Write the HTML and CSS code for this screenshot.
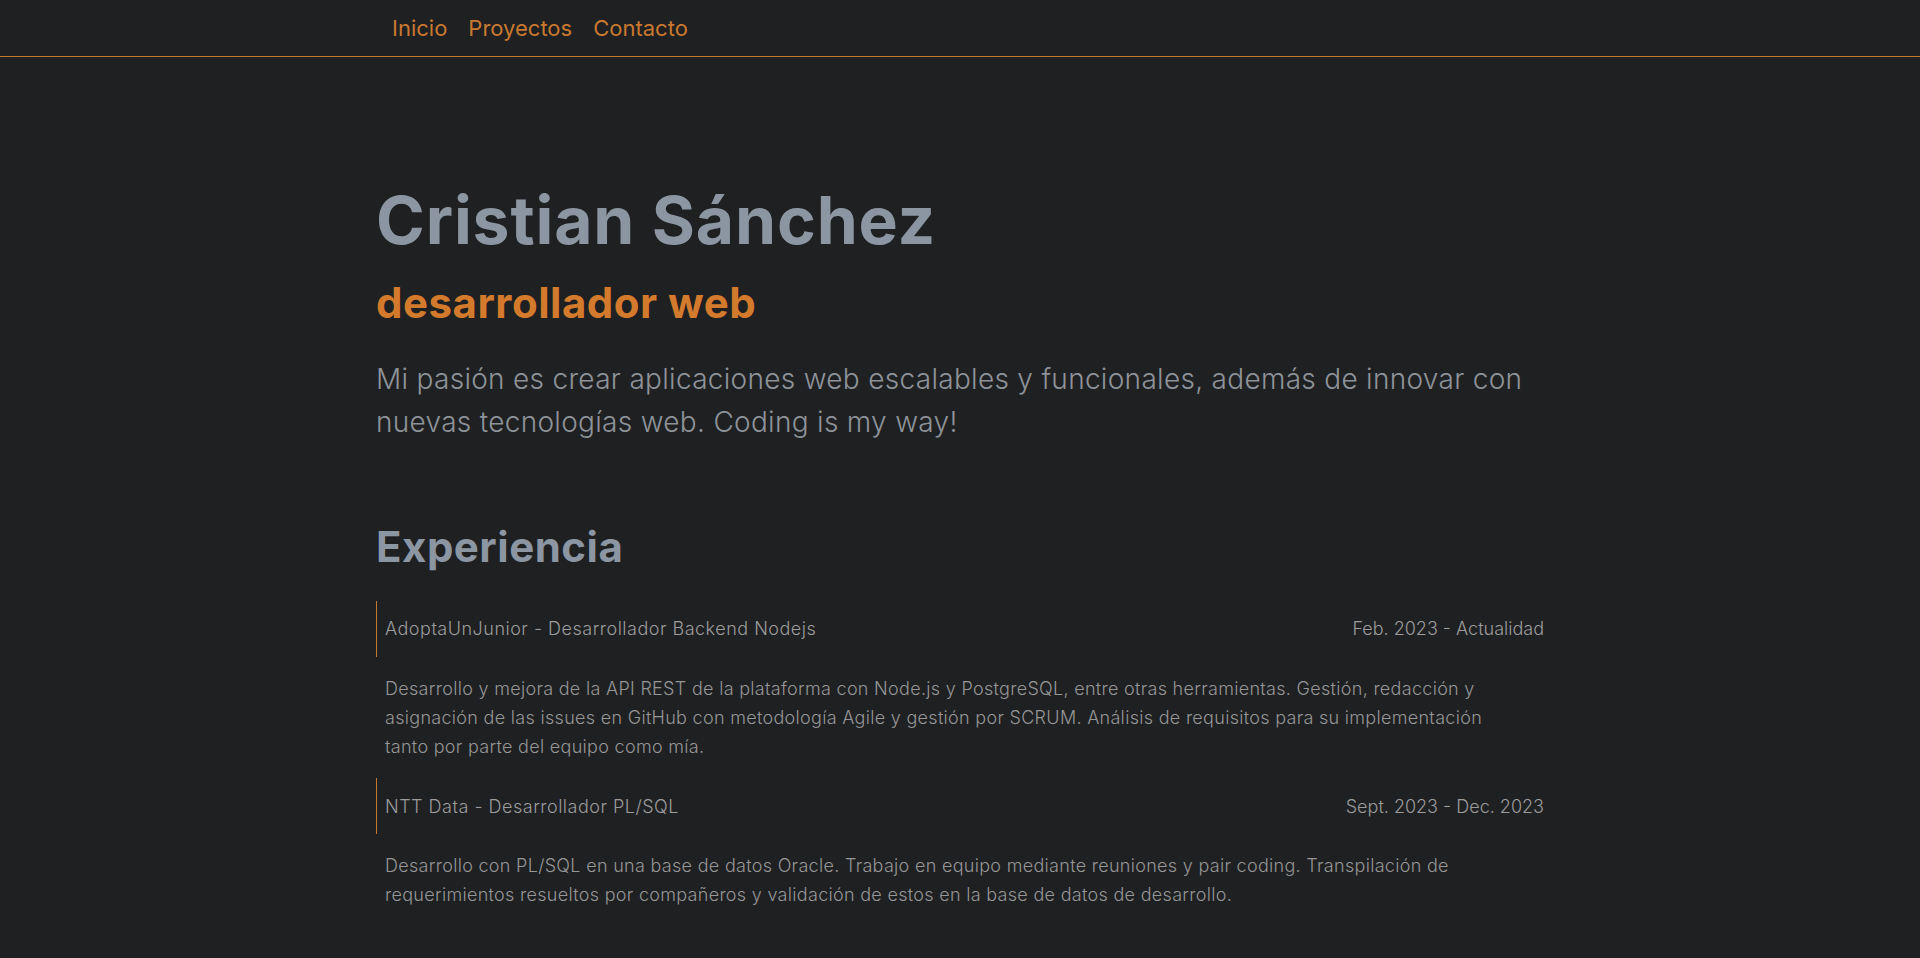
FILE: index.html
```html
<!DOCTYPE html>
<html lang="es">
<head>
<meta charset="utf-8">
<title>Cristian Sánchez</title>
<link rel="stylesheet" href="styles.css">
</head>
<body>
<header class="topbar">
  <nav class="nav">
    <a class="nav-link" href="#">Inicio</a>
    <a class="nav-link" href="#">Proyectos</a>
    <a class="nav-link" href="#">Contacto</a>
  </nav>
</header>
<main class="main">
  <section class="hero">
    <h1 class="name">Cristian Sánchez</h1>
    <h2 class="role">desarrollador web</h2>
    <p class="intro">Mi pasión es crear aplicaciones web escalables y funcionales, además de innovar con nuevas tecnologías web. Coding is my way!</p>
  </section>
  <section class="experience">
    <h3 class="section-title">Experiencia</h3>
    <article class="job">
      <div class="job-head">
        <span class="job-title">AdoptaUnJunior - Desarrollador Backend Nodejs</span>
        <span class="job-date">Feb. 2023 - Actualidad</span>
      </div>
      <p class="job-desc">Desarrollo y mejora de la API REST de la plataforma con Node.js y PostgreSQL, entre otras herramientas. Gestión, redacción y asignación de las issues en GitHub con metodología Agile y gestión por SCRUM. Análisis de requisitos para su implementación tanto por parte del equipo como mía.</p>
    </article>
    <article class="job">
      <div class="job-head">
        <span class="job-title">NTT Data - Desarrollador PL/SQL</span>
        <span class="job-date">Sept. 2023 - Dec. 2023</span>
      </div>
      <p class="job-desc">Desarrollo con PL/SQL en una base de datos Oracle. Trabajo en equipo mediante reuniones y pair coding. Transpilación de requerimientos resueltos por compañeros y validación de estos en la base de datos de desarrollo.</p>
    </article>
  </section>
</main>
</body>
</html>
```

FILE: styles.css
```css
* { box-sizing: border-box; }
html, body { margin: 0; padding: 0; }
body {
  background: #1f2022;
  font-family: Inter, "Open Sans", sans-serif;
  color: #999999;
  min-height: 958px;
}
.topbar {
  height: 57px;
  border-bottom: 1px solid #c8772f;
}
.nav {
  width: 1168px;
  margin: 0 auto;
  height: 56px;
  padding-left: 16px;
  display: flex;
  align-items: center;
  gap: 21px;
}
.nav-link {
  color: #c9782f;
  text-decoration: none;
  font-size: 22px;
  font-weight: 400;
  line-height: 1;
}
.main {
  width: 1168px;
  margin: 0 auto;
  padding-top: 124px;
}
.name {
  margin: 0;
  font-size: 66px;
  line-height: 1.2;
  font-weight: 700;
  color: #8b96a2;
  letter-spacing: 0.85px;
}
.role {
  margin: 18px 0 0;
  font-size: 42px;
  line-height: 1.2;
  font-weight: 700;
  color: #d47a2c;
  letter-spacing: 0.5px;
}
.intro {
  margin: 29px 0 0;
  font-size: 28px;
  line-height: 43.5px;
  font-weight: 300;
  color: #8e9399;
  letter-spacing: 0.3px;
}
.section-title {
  margin: 77px 0 0;
  font-size: 42px;
  line-height: 1.2;
  font-weight: 700;
  color: #8b96a2;
  letter-spacing: 0.5px;
}
.experience { padding-bottom: 40px; }
.job { margin-top: 29px; }
.job + .job { margin-top: 17px; }
.job-head {
  height: 56px;
  border-left: 1px solid #c8772f;
  padding-left: 8px;
  display: flex;
  align-items: center;
  justify-content: space-between;
  font-size: 18px;
  font-weight: 300;
  color: #9c9c9c;
}
.job-title { letter-spacing: 0.5px; }
.job-date { letter-spacing: 0; }
.job-desc {
  margin: 18px 0 0;
  padding: 0 40px 0 9px;
  font-size: 18px;
  line-height: 28.8px;
  font-weight: 300;
  color: #969696;
  letter-spacing: 0.3px;
}
```
